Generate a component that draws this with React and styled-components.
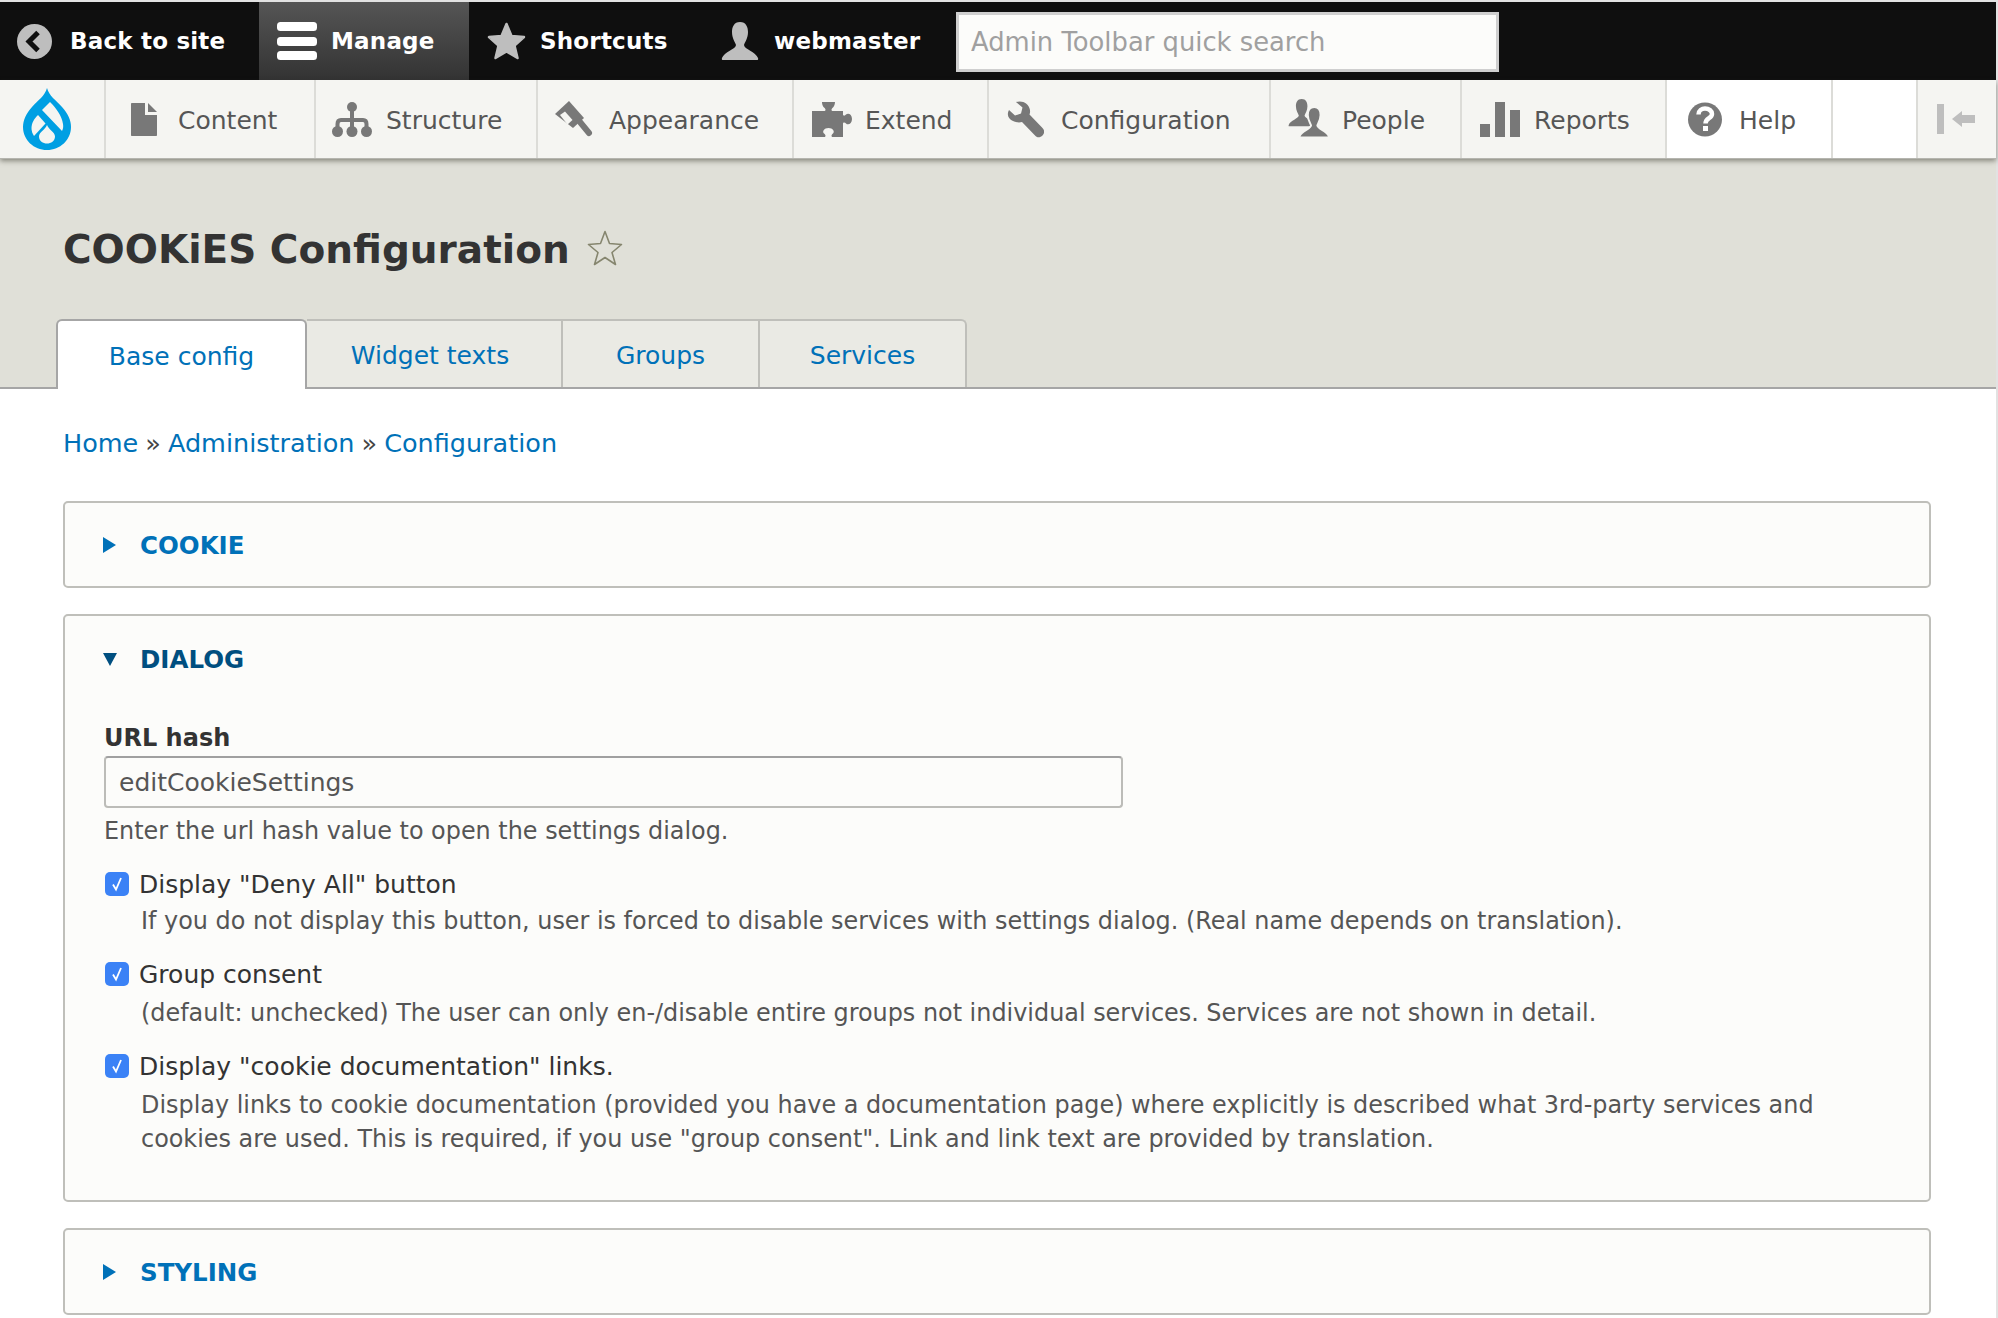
import React from 'react';
import styled, { createGlobalStyle } from 'styled-components';

const GlobalStyle = createGlobalStyle`
  html, body {
    margin: 0;
    padding: 0;
    background: #ffffff;
  }
  body {
    font-family: "DejaVu Sans", "Liberation Sans", sans-serif;
    overflow: hidden;
  }
`;

const Shell = styled.div`
  width: 1998px;
  height: 1318px;
  box-sizing: border-box;
  padding: 2px 2px 0 0;
  background: #e2e2e2;
  overflow: hidden;
`;

const Page = styled.div`
  height: 100%;
  background: #ffffff;
`;

const Toolbar = styled.div`
  display: flex;
  align-items: center;
  height: 78px;
  background: #0f0f0f;
`;

const BarItem = styled.a`
  display: flex;
  align-items: center;
  box-sizing: border-box;
  height: 100%;
  width: ${(p) => p.$w}px;
  padding-left: ${(p) => p.$pad}px;
  gap: ${(p) => p.$gap}px;
  color: #ffffff;
  font-size: 23px;
  font-weight: 700;
  letter-spacing: 0.2px;
  background: ${(p) => (p.$active ? 'linear-gradient(#555555, #333333)' : 'transparent')};
`;

const SearchBox = styled.input`
  box-sizing: border-box;
  width: 543px;
  height: 60px;
  margin-top: 2px;
  padding: 0 12px;
  border: 3px solid #cfcfcf;
  background: #fcfcfa;
  font-family: inherit;
  font-size: 25.8px;
  &::placeholder {
    color: #a0a0a0;
    opacity: 1;
  }
`;

const Tray = styled.div`
  position: relative;
  display: flex;
  height: 78px;
  background: #f5f5f2;
  box-shadow: 0 1px 0 #b5b5af, 0 3px 5px rgba(60, 60, 50, 0.55);
`;

const LogoCell = styled.div`
  display: flex;
  align-items: center;
  box-sizing: border-box;
  width: 104px;
  padding-left: 23px;
`;

const TrayItem = styled.a`
  display: flex;
  align-items: center;
  box-sizing: border-box;
  height: 100%;
  width: ${(p) => p.$w}px;
  padding-left: ${(p) => p.$pad}px;
  gap: ${(p) => p.$gap}px;
  border-left: 2px solid #dcdcd8;
  background: ${(p) => (p.$active ? '#ffffff' : 'transparent')};
  color: #565656;
  font-size: 25px;
`;

const TrayLabel = styled.span`
  padding-top: 3px;
`;

const ToggleCell = styled.div`
  display: flex;
  align-items: center;
  justify-content: center;
  flex: 1;
  border-left: 2px solid #dcdcd8;
  padding-right: 2px;
`;

const Head = styled.div`
  box-sizing: border-box;
  height: 231px;
  padding: 72px 0 0 63px;
  background: #e0e0d8;
  border-bottom: 2px solid #a6a6a6;
`;

const TitleRow = styled.div`
  display: flex;
  align-items: center;
  height: 36px;
  gap: 17px;
`;

const Title = styled.h1`
  margin: 0;
  padding-top: 3px;
  color: #333333;
  font-size: 39px;
  font-weight: 700;
  line-height: 38px;
`;

const Tabs = styled.div`
  display: flex;
  height: 70px;
  margin: 53px 0 0 -7px;
`;

const Tab = styled.a`
  display: flex;
  align-items: center;
  justify-content: center;
  box-sizing: border-box;
  width: ${(p) => p.$w}px;
  height: ${(p) => (p.$active ? 70 : 68)}px;
  border: 2px solid #bfbfba;
  border-left-width: ${(p) => (p.$first ? 2 : 0)}px;
  border-bottom: 0;
  border-color: ${(p) => (p.$active ? '#a6a6a6' : '#bfbfba')};
  border-radius: ${(p) => (p.$active ? '6px 6px 0 0' : p.$last ? '0 6px 0 0' : '0')};
  background: ${(p) => (p.$active ? '#ffffff' : '#eaeae4')};
  color: #0071b8;
  font-size: 25px;
  padding: 2px ${(p) => p.$shift || 0}px 0 0;
`;

const Main = styled.div`
  padding: 37px 65px 0 63px;
`;

const Crumbs = styled.div`
  display: flex;
  gap: 7px;
  height: 34px;
  line-height: 34px;
  font-size: 25.5px;
  color: #444444;
`;

const Link = styled.a`
  color: #0071b8;
`;

const Panel = styled.div`
  box-sizing: border-box;
  margin-top: ${(p) => p.$top}px;
  border: 2px solid #bfbfba;
  border-radius: 5px;
  background: #fcfcfa;
`;

const Summary = styled.div`
  display: flex;
  align-items: center;
  box-sizing: border-box;
  height: ${(p) => (p.$open ? 85 : 83)}px;
  padding: 2px 0 0 38px;
  gap: ${(p) => (p.$open ? 23 : 24)}px;
  color: ${(p) => (p.$open ? '#004f80' : '#0071b8')};
  font-size: 24.5px;
  font-weight: 700;
`;

const ClosedArrow = styled.span`
  width: 0;
  height: 0;
  margin-top: -2px;
  border-style: solid;
  border-width: 8px 0 8px 13px;
  border-color: transparent transparent transparent #0071b8;
`;

const OpenArrow = styled.span`
  width: 0;
  height: 0;
  border-style: solid;
  border-width: 13px 7.5px 0 7.5px;
  border-color: #004f80 transparent transparent transparent;
`;

const PanelBody = styled.div`
  padding: 20px 0 44px 39px;
`;

const FieldLabel = styled.div`
  height: 34px;
  line-height: 34px;
  color: #333333;
  font-size: 24px;
  font-weight: 700;
`;

const TextField = styled.input`
  display: block;
  box-sizing: border-box;
  width: 1019px;
  height: 52px;
  margin-top: 1px;
  padding: 0 13px;
  border: 2px solid #bcbcb8;
  border-top-color: #a0a0a0;
  border-radius: 4px;
  background: #fcfcfa;
  color: #555555;
  font-family: inherit;
  font-size: 25px;
`;

const Help = styled.div`
  margin-top: ${(p) => p.$top}px;
  margin-left: ${(p) => (p.$indent ? 37 : 0)}px;
  line-height: 34px;
  color: #555555;
  font-size: 23.9px;
`;

const CheckRow = styled.div`
  display: flex;
  align-items: center;
  gap: 10px;
  height: 34px;
  margin-top: ${(p) => p.$top}px;
  color: #333333;
  font-size: 25px;
`;

const CheckBox = styled.span`
  display: flex;
  align-items: center;
  justify-content: center;
  width: 24px;
  height: 24px;
  margin-left: 1px;
  border-radius: 5px;
  background: #3b82f6;
`;

const Draw = styled.svg`
  display: block;
  flex: none;
`;

const BUST =
  'M19 0C25 0 27 5 27 10C27 16 24 20 23 23C23 27 35 30 37 36C37.5 37.5 37 38 36 38L2 38C1 38 .5 37.5 1 36C3 30 15 27 15 23C14 20 11 16 11 10C11 5 13 0 19 0Z';

const BackIcon = () => (
  <Draw width="35" height="35" viewBox="0 0 35 35">
    <circle cx="17.5" cy="17.5" r="17.5" fill="#bebebe" />
    <path d="M21 8.5L12 17.5L21 26.5" fill="none" stroke="#0f0f0f" strokeWidth="5" />
  </Draw>
);

const MenuIcon = () => (
  <Draw width="40" height="38" viewBox="0 0 40 38">
    <rect x="0" y="0" width="40" height="9" rx="3.5" fill="#ffffff" />
    <rect x="0" y="15" width="40" height="9" rx="3.5" fill="#ffffff" />
    <rect x="0" y="29" width="40" height="9" rx="3.5" fill="#ffffff" />
  </Draw>
);

const StarIcon = () => (
  <Draw width="39" height="38" viewBox="0 0 39 38">
    <path
      d="M19.5 2L24.5 14L37 15L27.5 23.5L30.5 36L19.5 29.5L8.5 36L11.5 23.5L2 15L14.5 14Z"
      fill="#bebebe"
      stroke="#bebebe"
      strokeWidth="2.5"
      strokeLinejoin="round"
    />
  </Draw>
);

const UserIcon = () => (
  <Draw width="38" height="38" viewBox="0 0 38 38">
    <path d={BUST} fill="#bebebe" />
  </Draw>
);

const DropLogo = () => (
  <Draw width="48" height="62" viewBox="0 0 48 62">
    <path
      d="M24 0C26 8 33 12 39 19C45 26 48 32 48 39C48 52 37 62 24 62C11 62 0 52 0 39C0 32 3 26 9 19C15 12 22 8 24 0Z"
      fill="#009fe3"
    />
    <path d="M19 22L27 14C33 20 39 28 40 36C40.5 39 40 41 39 43Z" fill="#f5f5f2" />
    <path d="M15 27C11 31 8.5 35 8.5 40C8.5 43 9.5 46 11 48L22.5 35.5Z" fill="#f5f5f2" />
    <path
      d="M24 37C22 42 16 44 16 48.5C16 53 20 55.5 24 55.5C28 55.5 32 53 32 48.5C32 44 26 42 24 37Z"
      fill="#f5f5f2"
    />
  </Draw>
);

const ContentIcon = () => (
  <Draw width="26" height="33" viewBox="0 0 26 33">
    <path d="M0 1C0 .4 .4 0 1 0L14 0L14 12L26 12L26 32C26 32.6 25.6 33 25 33L1 33C.4 33 0 32.6 0 32Z" fill="#787878" />
    <path d="M17 0L26 9L17 9Z" fill="#787878" />
  </Draw>
);

const StructureIcon = () => (
  <Draw width="40" height="35" viewBox="0 0 40 35">
    <circle cx="20" cy="5" r="5" fill="#787878" />
    <path d="M20 5L20 29M5.5 29L5.5 22C5.5 19 7 18 9 18L31 18C33 18 34.5 19 34.5 22L34.5 29" fill="none" stroke="#787878" strokeWidth="4" />
    <circle cx="5.5" cy="29.5" r="5.5" fill="#787878" />
    <circle cx="20" cy="29.5" r="5.5" fill="#787878" />
    <circle cx="34.5" cy="29.5" r="5.5" fill="#787878" />
  </Draw>
);

const AppearanceIcon = () => (
  <Draw width="38" height="37" viewBox="0 0 38 37">
    <path d="M0 13L14 0L29 17L18 27Z" fill="#787878" />
    <path d="M5 14L10 10.5L17.5 19L12.5 23.5Z" fill="#f5f5f2" />
    <path d="M25 21L34 32" fill="none" stroke="#787878" strokeWidth="6" strokeLinecap="round" />
  </Draw>
);

const ExtendIcon = () => (
  <Draw width="40" height="35" viewBox="0 0 40 35">
    <path
      d="M0 9L12 9C14 9 14 7 12 5.5C10 3.5 10 0 10 0L23 0C23 0 23 3.5 21 5.5C19 7 19 9 21 9L31 9L31 12.5C31 14 33 14 34 12.5C36 10.5 40 12 40 17C40 22 36 23.5 34 21.5C33 20 31 20 31 21.5L31 35L21 35C19 35 19 33 21 31.5C23 29.5 21 26 16.5 26C12 26 10 29.5 12 31.5C14 33 14 35 12 35L0 35Z"
      fill="#787878"
    />
  </Draw>
);

const WrenchIcon = () => (
  <Draw width="38" height="37" viewBox="0 0 38 37">
    <path
      d="M3 9L9 14.5L15 12.5L16.5 6.5L10 1C16 -1 23 2 24 9C24.2 11 24 12 23.5 13.5L36.5 27C39 29.5 38.5 32.5 36.5 34.5C34.5 36.5 31.5 37 29.5 35L16 21C14 21.5 12 21.5 10 21C3 19.5 0 14 3 9Z"
      fill="#787878"
    />
  </Draw>
);

const PeopleIcon = () => (
  <Draw width="41" height="40" viewBox="0 0 41 40">
    <path d={BUST} fill="#787878" transform="scale(0.72)" />
    <path d={BUST} fill="#787878" stroke="#f5f5f2" strokeWidth="2.5" transform="translate(11 8) scale(0.8)" />
  </Draw>
);

const ReportsIcon = () => (
  <Draw width="40" height="35" viewBox="0 0 40 35">
    <rect x="0" y="22" width="10" height="13" fill="#787878" />
    <rect x="15" y="0" width="10" height="35" fill="#787878" />
    <rect x="30" y="8" width="10" height="27" fill="#787878" />
  </Draw>
);

const HelpIcon = () => (
  <Draw width="34" height="35" viewBox="0 0 34 35">
    <circle cx="17" cy="17.5" r="17" fill="#787878" />
    <path d="M10.5 12.5C10.5 8.5 14 6.5 17 6.5C21 6.5 24 9 24 12C24 16.5 17.5 16 17.5 21.5" fill="none" stroke="#ffffff" strokeWidth="4.5" />
    <rect x="15" y="24" width="5" height="5" fill="#ffffff" />
  </Draw>
);

const ToggleIcon = () => (
  <Draw width="38" height="30" viewBox="0 0 38 30">
    <rect x="0" y="0" width="7" height="30" fill="#bebebe" />
    <path d="M15 15L25 7L25 11L38 11L38 19L25 19L25 23Z" fill="#bebebe" />
  </Draw>
);

const OutlineStar = () => (
  <Draw width="36" height="36" viewBox="0 0 36 36">
    <path
      d="M18 1.5L22.5 13.5L34.5 14.5L25 22.5L28.5 34.5L18 27.5L7.5 34.5L11 22.5L1.5 14.5L13.5 13.5Z"
      fill="none"
      stroke="#86866f"
      strokeWidth="1.6"
      strokeLinejoin="round"
    />
  </Draw>
);

const CheckMark = () => (
  <Draw width="14" height="16" viewBox="0 0 14 16">
    <path d="M3 8.5L6 13.5L11 2" fill="none" stroke="#ffffff" strokeWidth="1.8" />
  </Draw>
);

const trayItems = [
  { label: 'Content', Icon: ContentIcon, w: 210, pad: 25, gap: 21 },
  { label: 'Structure', Icon: StructureIcon, w: 222, pad: 16, gap: 14 },
  { label: 'Appearance', Icon: AppearanceIcon, w: 256, pad: 17, gap: 16 },
  { label: 'Extend', Icon: ExtendIcon, w: 195, pad: 18, gap: 13 },
  { label: 'Configuration', Icon: WrenchIcon, w: 282, pad: 17, gap: 17 },
  { label: 'People', Icon: PeopleIcon, w: 191, pad: 17, gap: 13 },
  { label: 'Reports', Icon: ReportsIcon, w: 205, pad: 18, gap: 14 },
  { label: 'Help', Icon: HelpIcon, w: 166, pad: 21, gap: 17, active: true },
];

const tabs = [
  { label: 'Base config', w: 251, active: true, first: true },
  { label: 'Widget texts', w: 256, shift: 8 },
  { label: 'Groups', w: 197 },
  { label: 'Services', w: 207, last: true },
];

export default function App() {
  return (
    <>
      <GlobalStyle />
      <Shell>
        <Page>
          <Toolbar>
            <BarItem $w={259} $pad={17} $gap={18}>
              <BackIcon />
              Back to site
            </BarItem>
            <BarItem $w={210} $pad={18} $gap={14} $active>
              <MenuIcon />
              Manage
            </BarItem>
            <BarItem $w={231} $pad={18} $gap={14}>
              <StarIcon />
              Shortcuts
            </BarItem>
            <BarItem $w={256} $pad={21} $gap={15}>
              <UserIcon />
              webmaster
            </BarItem>
            <SearchBox placeholder="Admin Toolbar quick search" readOnly />
          </Toolbar>
          <Tray>
            <LogoCell>
              <DropLogo />
            </LogoCell>
            {trayItems.map(({ label, Icon, w, pad, gap, active }) => (
              <TrayItem key={label} $w={w} $pad={pad} $gap={gap} $active={active}>
                <Icon />
                <TrayLabel>{label}</TrayLabel>
              </TrayItem>
            ))}
            <TrayItem $w={85} $pad={0} $gap={0} $active />
            <ToggleCell>
              <ToggleIcon />
            </ToggleCell>
          </Tray>
          <Head>
            <TitleRow>
              <Title>COOKiES Configuration</Title>
              <OutlineStar />
            </TitleRow>
            <Tabs>
              {tabs.map(({ label, w, active, first, last, shift }) => (
                <Tab key={label} $w={w} $active={active} $first={first} $last={last} $shift={shift}>
                  {label}
                </Tab>
              ))}
            </Tabs>
          </Head>
          <Main>
            <Crumbs>
              <Link>Home</Link>»<Link>Administration</Link>»<Link>Configuration</Link>
            </Crumbs>
            <Panel $top={41}>
              <Summary>
                <ClosedArrow />
                COOKIE
              </Summary>
            </Panel>
            <Panel $top={26}>
              <Summary $open>
                <OpenArrow />
                DIALOG
              </Summary>
              <PanelBody>
                <FieldLabel>URL hash</FieldLabel>
                <TextField value="editCookieSettings" readOnly />
                <Help $top={6}>Enter the url hash value to open the settings dialog.</Help>
                <CheckRow $top={19}>
                  <CheckBox>
                    <CheckMark />
                  </CheckBox>
                  Display "Deny All" button
                </CheckRow>
                <Help $top={3} $indent>
                  If you do not display this button, user is forced to disable services with settings dialog. (Real name depends on translation).
                </Help>
                <CheckRow $top={19}>
                  <CheckBox>
                    <CheckMark />
                  </CheckBox>
                  Group consent
                </CheckRow>
                <Help $top={5} $indent>
                  (default: unchecked) The user can only en-/disable entire groups not individual services. Services are not shown in detail.
                </Help>
                <CheckRow $top={19}>
                  <CheckBox>
                    <CheckMark />
                  </CheckBox>
                  Display "cookie documentation" links.
                </CheckRow>
                <Help $top={5} $indent>
                  Display links to cookie documentation (provided you have a documentation page) where explicitly is described what 3rd-party services and
                  <br />
                  cookies are used. This is required, if you use "group consent". Link and link text are provided by translation.
                </Help>
              </PanelBody>
            </Panel>
            <Panel $top={26}>
              <Summary>
                <ClosedArrow />
                STYLING
              </Summary>
            </Panel>
          </Main>
        </Page>
      </Shell>
    </>
  );
}
